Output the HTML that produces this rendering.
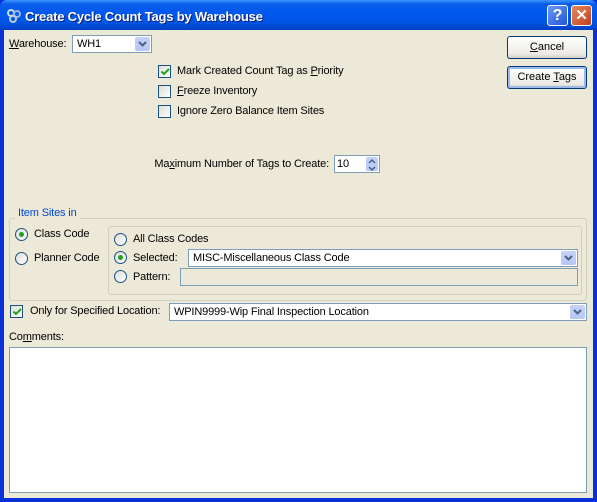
<!DOCTYPE html>
<html><head><style>
*{margin:0;padding:0;box-sizing:border-box}
body{width:597px;height:502px;overflow:hidden;background:#0831d9;font-family:"Liberation Sans",sans-serif;font-size:11px;color:#000;position:relative}
.a{position:absolute}
#title{left:0;top:0;width:597px;height:30px;background:linear-gradient(#3d95ff 0,#0a5ee8 4px,#0058ee 12px,#0055e5 22px,#0046d0 28px,#003dbd 30px);border-radius:7px 7px 0 0}
#body{left:4px;top:30px;width:589px;height:468px;background:#ece9d8}
.t{white-space:nowrap;line-height:13px;letter-spacing:-0.15px}
.in{background:#fff;border:1px solid #7f9db9}
.btn{background:linear-gradient(#fff,#ecebe6 80%,#d6d0c5);border:1px solid #003c74;border-radius:3px;text-align:center;line-height:20px}
.cb{width:13px;height:13px;border:1px solid #1c5180;background:linear-gradient(135deg,#dcdcd7,#fff)}
.rd{width:13px;height:13px;border:1px solid #1c5180;border-radius:50%;background:linear-gradient(135deg,#dcdcd7,#fff)}
.dot{position:absolute;left:3px;top:3px;width:5px;height:5px;border-radius:50%;background:#21a121}
.dd{position:absolute;right:1px;top:1px;width:15px;bottom:1px;background:linear-gradient(#c6d3f7,#b4c8f6);border-radius:2px}
.dd svg{position:absolute;left:3px;top:4px}
u{text-decoration:underline}
</style></head><body>
<div id="title" class="a">
<svg class="a" style="left:6px;top:8px" width="16" height="16"><circle cx="5" cy="5" r="3" fill="none" stroke="#cde" stroke-width="2"/><circle cx="11" cy="6" r="3" fill="none" stroke="#9bd" stroke-width="2"/><circle cx="7" cy="11" r="3" fill="none" stroke="#bcd" stroke-width="2"/></svg>
<div class="a" style="left:25px;top:9px;white-space:nowrap;color:#fff;font-weight:bold;font-size:13px;letter-spacing:-0.2px;text-shadow:1px 1px #0a1e7a">Create Cycle Count Tags by Warehouse</div>
<div class="a" style="left:547px;top:5px;width:21px;height:21px;border:1px solid #fff;border-radius:3px;background:linear-gradient(135deg,#6b98f5,#2157d6);color:#fff;font-weight:bold;font-size:16px;text-align:center;line-height:19px">?</div>
<div class="a" style="left:571px;top:5px;width:21px;height:21px;border:1px solid #fff;border-radius:3px;background:linear-gradient(135deg,#e5895f,#c1401e);color:#fff;font-weight:bold;font-size:15px;text-align:center;line-height:19px">✕</div>
</div>
<div id="body" class="a"></div>

<div class="a t" style="left:9px;top:38px"><u>W</u>arehouse:</div>
<div class="a in" style="left:72px;top:35px;width:80px;height:18px"><span class="a t" style="left:4px;top:2px">WH1</span><div class="dd"><svg width="9" height="7"><path d="M1 1l3.5 3.5L8 1" stroke="#4d6185" stroke-width="2" fill="none"/></svg></div></div>

<div class="a btn" style="left:507px;top:36px;width:80px;height:23px"><u>C</u>ancel</div>
<div class="a btn" style="left:507px;top:66px;width:80px;height:23px;box-shadow:inset 0 0 0 2px #9db9eb">Create <u>T</u>ags</div>

<div class="a cb" style="left:158px;top:65px"><svg class="a" style="left:1px;top:1px" width="10" height="10"><path d="M1.5 4.5l2.5 2.5 5-5" stroke="#21a121" stroke-width="2" fill="none"/></svg></div>
<div class="a t" style="left:177px;top:65px">Mark Created Count Tag as <u>P</u>riority</div>
<div class="a cb" style="left:158px;top:85px"></div>
<div class="a t" style="left:177px;top:85px"><u>F</u>reeze Inventory</div>
<div class="a cb" style="left:158px;top:105px"></div>
<div class="a t" style="left:177px;top:105px">Ignore Zero Balance Item Sites</div>

<div class="a t" style="right:268px;top:158px">Ma<u>x</u>imum Number of Tags to Create:</div>
<div class="a in" style="left:334px;top:155px;width:46px;height:18px"><span class="a t" style="left:2px;top:2px">10</span><div class="dd" style="width:12px;right:1px"><svg style="left:2px;top:1px" width="8" height="14"><path d="M1 5l3-3 3 3M1 9l3 3 3-3" stroke="#4d6185" stroke-width="1.5" fill="none"/></svg></div></div>

<div class="a" style="left:9px;top:218px;width:578px;height:83px;border:1px solid #d0d0bf;border-radius:3px"></div>
<div class="a t" style="left:15px;top:207px;color:#0046d5;background:#ece9d8;padding:0 3px">Item Sites in</div>
<div class="a rd" style="left:15px;top:228px"><div class="dot"></div></div>
<div class="a t" style="left:34px;top:228px">Class Code</div>
<div class="a rd" style="left:15px;top:252px"></div>
<div class="a t" style="left:34px;top:252px">Planner Code</div>

<div class="a" style="left:108px;top:226px;width:474px;height:69px;border:1px solid #d0d0bf;border-radius:3px"></div>
<div class="a rd" style="left:114px;top:233px"></div>
<div class="a t" style="left:133px;top:233px">All Class Codes</div>
<div class="a rd" style="left:114px;top:251px"><div class="dot"></div></div>
<div class="a t" style="left:133px;top:252px">Selected:</div>
<div class="a in" style="left:188px;top:249px;width:390px;height:18px"><span class="a t" style="left:4px;top:2px">MISC-Miscellaneous Class Code</span><div class="dd"><svg width="9" height="7"><path d="M1 1l3.5 3.5L8 1" stroke="#4d6185" stroke-width="2" fill="none"/></svg></div></div>
<div class="a rd" style="left:114px;top:270px"></div>
<div class="a t" style="left:133px;top:271px">Pattern:</div>
<div class="a" style="left:180px;top:268px;width:398px;height:18px;border:1px solid #7f9db9;background:#ece9d8"></div>

<div class="a cb" style="left:10px;top:305px"><svg class="a" style="left:1px;top:1px" width="10" height="10"><path d="M1.5 4.5l2.5 2.5 5-5" stroke="#21a121" stroke-width="2" fill="none"/></svg></div>
<div class="a t" style="left:30px;top:305px">Only for Specified Location:</div>
<div class="a in" style="left:169px;top:303px;width:418px;height:18px"><span class="a t" style="left:4px;top:2px">WPIN9999-Wip Final Inspection Location</span><div class="dd"><svg width="9" height="7"><path d="M1 1l3.5 3.5L8 1" stroke="#4d6185" stroke-width="2" fill="none"/></svg></div></div>

<div class="a t" style="left:9px;top:331px">Co<u>m</u>ments:</div>
<div class="a in" style="left:9px;top:347px;width:578px;height:146px"></div>
</body></html>
